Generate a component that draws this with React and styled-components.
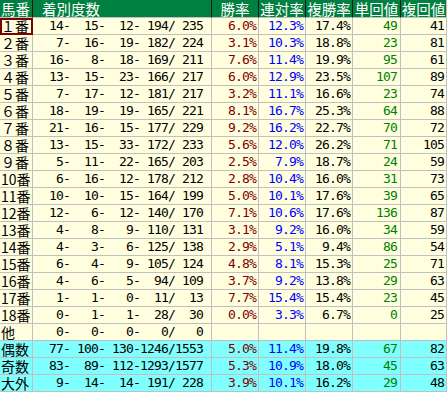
import React from "react";
import styled, { createGlobalStyle } from "styled-components";

const Global = createGlobalStyle`
  html, body { margin: 0; padding: 0; background: #ffffff; }
  #root { width: 447px; }
`;

const COLS = "33px 179px 47px 47px 47px 48px 46px";
const LINE = "#c0c0c0";
const JP = `"Noto Sans CJK JP", "Noto Sans CJK SC", sans-serif`;
const MONO = `"DejaVu Sans Mono", "Liberation Mono", monospace`;

const Sheet = styled.div`
  width: 447px;
  display: flex;
  flex-direction: column;
`;

const HeadRow = styled.div`
  display: grid;
  grid-template-columns: ${COLS};
  height: 18px;
  background: #008040;
`;

const HeadCell = styled.div`
  box-sizing: border-box;
  height: 18px;
  border-right: 1px solid #1a1a1a;
  border-bottom: 1px solid ${LINE};
  color: #ffffff;
  font-family: ${JP};
  font-size: 14.5px;
  line-height: 17px;
  white-space: nowrap;
  text-align: ${(p) => p.$align || "center"};
  padding-left: ${(p) => p.$pl || 0}px;
  &:last-child { border-right-color: ${LINE}; }
`;

const Row = styled.div`
  display: grid;
  grid-template-columns: ${COLS};
  height: 17px;
  background: ${(p) => (p.$summary ? "#80ffff" : "#ffffe0")};
`;

const Cell = styled.div`
  box-sizing: border-box;
  border-right: 1px solid ${LINE};
  border-bottom: 1px solid ${LINE};
  height: 17px;
  line-height: 16px;
  white-space: pre;
`;

const LabelCell = styled(Cell)`
  font-family: ${JP};
  font-size: 14px;
  color: #000;
  padding-left: 1px;
  outline: ${(p) => (p.$selected ? "2px solid #800000" : "none")};
  outline-offset: -2px;
`;

const NumCell = styled(Cell)`
  font-family: ${MONO};
  font-size: 13px;
  letter-spacing: -0.83px;
  text-align: right;
  color: ${(p) => p.$color || "#000"};
  padding-right: ${(p) => (p.$pr != null ? p.$pr : 2)}px;
`;

const rows = [
  ["１番", 14, 15, 12, 194, 235, "6.0%", "12.3%", "17.4%", "49", "41"],
  ["２番", 7, 16, 19, 182, 224, "3.1%", "10.3%", "18.8%", "23", "81"],
  ["３番", 16, 8, 18, 169, 211, "7.6%", "11.4%", "19.9%", "95", "61"],
  ["４番", 13, 15, 23, 166, 217, "6.0%", "12.9%", "23.5%", "107", "89"],
  ["５番", 7, 17, 12, 181, 217, "3.2%", "11.1%", "16.6%", "23", "74"],
  ["６番", 18, 19, 19, 165, 221, "8.1%", "16.7%", "25.3%", "64", "88"],
  ["７番", 21, 16, 15, 177, 229, "9.2%", "16.2%", "22.7%", "70", "72"],
  ["８番", 13, 15, 33, 172, 233, "5.6%", "12.0%", "26.2%", "71", "105"],
  ["９番", 5, 11, 22, 165, 203, "2.5%", "7.9%", "18.7%", "24", "59"],
  ["10番", 6, 16, 12, 178, 212, "2.8%", "10.4%", "16.0%", "31", "73"],
  ["11番", 10, 10, 15, 164, 199, "5.0%", "10.1%", "17.6%", "39", "65"],
  ["12番", 12, 6, 12, 140, 170, "7.1%", "10.6%", "17.6%", "136", "87"],
  ["13番", 4, 8, 9, 110, 131, "3.1%", "9.2%", "16.0%", "34", "59"],
  ["14番", 4, 3, 6, 125, 138, "2.9%", "5.1%", "9.4%", "86", "54"],
  ["15番", 6, 4, 9, 105, 124, "4.8%", "8.1%", "15.3%", "25", "71"],
  ["16番", 4, 6, 5, 94, 109, "3.7%", "9.2%", "13.8%", "29", "63"],
  ["17番", 1, 1, 0, 11, 13, "7.7%", "15.4%", "15.4%", "23", "45"],
  ["18番", 0, 1, 1, 28, 30, "0.0%", "3.3%", "6.7%", "0", "25"],
  ["他", 0, 0, 0, 0, 0, "", "", "", "", ""],
  ["偶数", 77, 100, 130, 1246, 1553, "5.0%", "11.4%", "19.8%", "67", "82", true],
  ["奇数", 83, 89, 112, 1293, 1577, "5.3%", "10.9%", "18.0%", "45", "63", true],
  ["大外", 9, 14, 14, 191, 228, "3.9%", "10.1%", "16.2%", "29", "48", true],
];

const pad = (n) => String(n).padStart(4, " ");
const counts = (a, b, c, d, e) => `${pad(a)}-${pad(b)}-${pad(c)}-${pad(d)}/${pad(e)}`;

export default function App() {
  return (
    <>
      <Global />
      <Sheet>
        <HeadRow>
          <HeadCell $align="left" $pl={1}>馬番</HeadCell>
          <HeadCell $align="left" $pl={9}>着別度数</HeadCell>
          <HeadCell>勝率</HeadCell>
          <HeadCell>連対率</HeadCell>
          <HeadCell>複勝率</HeadCell>
          <HeadCell>単回値</HeadCell>
          <HeadCell>複回値</HeadCell>
        </HeadRow>
        {rows.map((r, i) => (
          <Row key={i} $summary={!!r[11]}>
            <LabelCell $selected={i === 0}>{r[0]}</LabelCell>
            <NumCell $pr={8}>{counts(r[1], r[2], r[3], r[4], r[5])}</NumCell>
            <NumCell $color="#800000">{r[6]}</NumCell>
            <NumCell $color="#0000ff">{r[7]}</NumCell>
            <NumCell>{r[8]}</NumCell>
            <NumCell $color="#008000" $pr={3}>{r[9]}</NumCell>
            <NumCell>{r[10]}</NumCell>
          </Row>
        ))}
      </Sheet>
    </>
  );
}
